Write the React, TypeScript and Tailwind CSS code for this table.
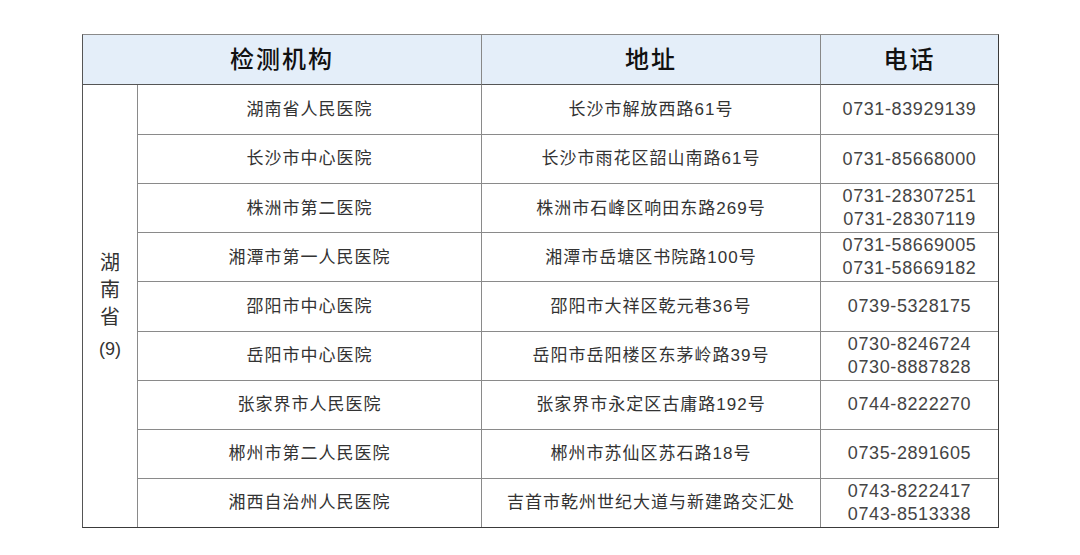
import React from "react";

const rows: { name: string; addr: string; phones: string[] }[] = [
  { name: "湖南省人民医院", addr: "长沙市解放西路61号", phones: ["0731-83929139"] },
  { name: "长沙市中心医院", addr: "长沙市雨花区韶山南路61号", phones: ["0731-85668000"] },
  { name: "株洲市第二医院", addr: "株洲市石峰区响田东路269号", phones: ["0731-28307251", "0731-28307119"] },
  { name: "湘潭市第一人民医院", addr: "湘潭市岳塘区书院路100号", phones: ["0731-58669005", "0731-58669182"] },
  { name: "邵阳市中心医院", addr: "邵阳市大祥区乾元巷36号", phones: ["0739-5328175"] },
  { name: "岳阳市中心医院", addr: "岳阳市岳阳楼区东茅岭路39号", phones: ["0730-8246724", "0730-8887828"] },
  { name: "张家界市人民医院", addr: "张家界市永定区古庸路192号", phones: ["0744-8222270"] },
  { name: "郴州市第二人民医院", addr: "郴州市苏仙区苏石路18号", phones: ["0735-2891605"] },
  { name: "湘西自治州人民医院", addr: "吉首市乾州世纪大道与新建路交汇处", phones: ["0743-8222417", "0743-8513338"] },
];

export default function App() {
  return (
    <div
      className="w-[1080px] h-[555px] bg-white pt-[34px] pl-[82px]"
      style={{ fontFamily: '"Liberation Sans", "Noto Sans CJK SC", sans-serif' }}
    >
      <div className="w-[917px] h-[494px] border border-[#3a3a3a] border-t-[#8a8a8a] border-l-[#555] grid grid-cols-[55px_344px_339px_177px] grid-rows-[50px_repeat(9,minmax(0,1fr))]">
        <div className="col-span-2 bg-[#e4eef9] border-b border-r border-[#555] border-r-[#888] flex items-center justify-center text-[24px] tracking-[2px] font-medium text-[#111]">
          检测机构
        </div>
        <div className="bg-[#e4eef9] border-b border-r border-[#555] border-r-[#888] flex items-center justify-center text-[24px] tracking-[2px] font-medium text-[#111]">
          地址
        </div>
        <div className="bg-[#e4eef9] border-b border-[#555] flex items-center justify-center text-[24px] tracking-[2px] font-medium text-[#111]">
          电话
        </div>
        <div className="row-span-9 col-start-1 row-start-2 border-r border-[#8a8a8a] flex flex-col items-center justify-center text-[20px] leading-[27px] text-[#333] pt-[2px]">
          <span>湖</span>
          <span>南</span>
          <span>省</span>
          <span className="text-[18px] mt-[5px]">(9)</span>
        </div>
        {rows.map((r, i) => (
          <React.Fragment key={i}>
            <div
              className={`col-start-2 border-r border-[#8a8a8a] flex items-center justify-center text-[17px] tracking-[1px] text-[#333] ${i > 0 ? "border-t" : ""}`}
            >
              {r.name}
            </div>
            <div
              className={`border-r border-[#8a8a8a] flex items-center justify-center text-[17px] tracking-[1px] text-[#333] ${i > 0 ? "border-t" : ""}`}
            >
              {r.addr}
            </div>
            <div
              className={`border-[#8a8a8a] flex flex-col items-center justify-center text-[18px] leading-[23px] tracking-[0.6px] text-[#444] ${i > 0 ? "border-t" : ""}`}
            >
              {r.phones.map((p) => (
                <span key={p}>{p}</span>
              ))}
            </div>
          </React.Fragment>
        ))}
      </div>
    </div>
  );
}
